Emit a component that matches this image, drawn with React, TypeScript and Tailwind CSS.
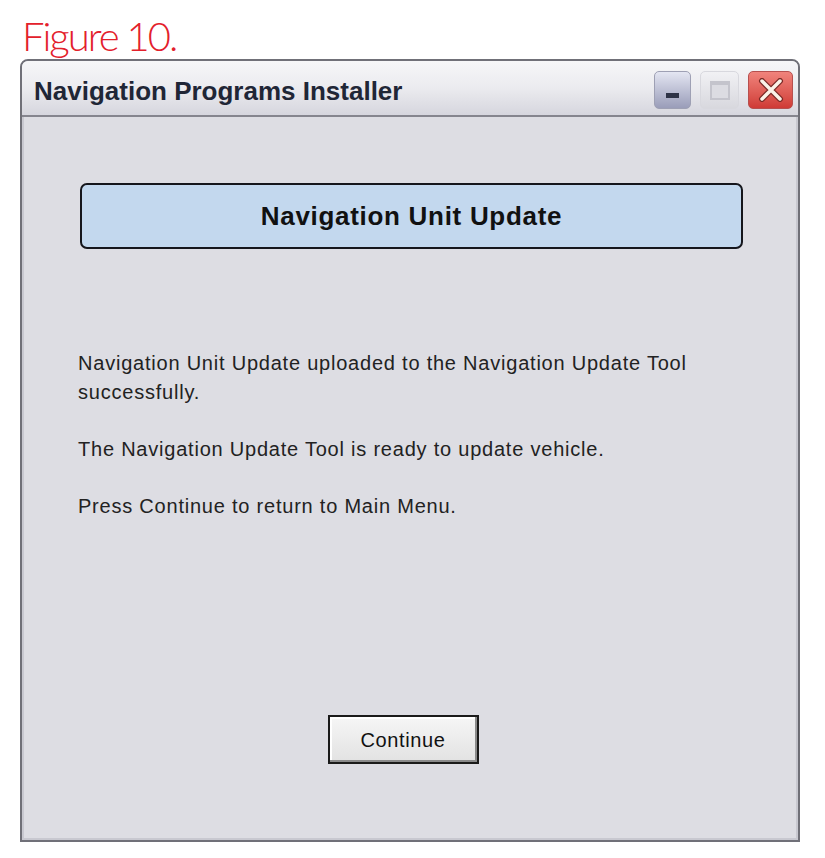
export default function App() {
  return (
    <div className="min-h-screen w-[825px] bg-white pt-[14px] pl-[22px]">
      <div
        className="text-[#e3202b] text-[40px] leading-[44px] font-light tracking-[-2px]"
        style={{ fontFamily: 'Lato, "Open Sans", sans-serif' }}
      >
        Figure 10.
      </div>

      <div className="ml-[-2px] mt-[1px] w-[780px] h-[783px] flex flex-col rounded-t-[8px] border-2 border-[#707078] bg-[#dddde3]">
        {/* title bar */}
        <div className="h-[56px] flex items-center justify-between pl-[12px] pr-[5px] rounded-t-[6px] bg-gradient-to-b from-[#f6f6f8] via-[#ebebef] to-[#d6d6de] border-b-2 border-[#85858e]">
          <span
            className="pt-[6px] text-[26px] font-bold text-[#1f2636] tracking-[0px]"
            style={{ fontFamily: '"Liberation Sans", Arial, sans-serif' }}
          >
            Navigation Programs Installer
          </span>
          <div className="flex items-center gap-[9px] pt-[4px]">
            <div className="w-[37px] h-[38px] rounded-[5px] border border-[#9ea0b4] bg-gradient-to-b from-[#e4e6f2] to-[#9a9db9] flex items-end justify-center pb-[10px]">
              <div className="w-[13px] h-[5px] bg-[#2e3347]" />
            </div>
            <div className="w-[39px] h-[38px] rounded-[5px] border border-[#d8d8de] bg-gradient-to-b from-[#f1f1f4] to-[#d8d8de] flex items-center justify-center">
              <div className="w-[20px] h-[19px] border-2 border-t-[4px] border-[#c4c4cc] bg-[#dcdce2]" />
            </div>
            <div className="w-[45px] h-[38px] rounded-[5px] border border-[#b7504f] bg-gradient-to-b from-[#f0837c] to-[#cf3a36] flex items-center justify-center">
              <svg width="26" height="24" viewBox="0 0 26 24">
                <path d="M4 3 L22 21 M22 3 L4 21" stroke="#7a2a26" strokeWidth="6" strokeLinecap="round" />
                <path d="M4 3 L22 21 M22 3 L4 21" stroke="#fbf3e8" strokeWidth="3.5" strokeLinecap="round" />
              </svg>
            </div>
          </div>
        </div>

        {/* body */}
        <div
          className="flex-1 flex flex-col pt-[66px] pl-[54px] pr-[56px] pb-[74px] border-2 border-t-0 border-[#c8c8d0] text-[#222]"
          style={{ fontFamily: '"Liberation Sans", Arial, sans-serif' }}
        >
          <div className="ml-[2px] w-[663px] h-[66px] rounded-[7px] border-2 border-[#15161c] bg-[#c3d8ee] flex items-center justify-center">
            <span className="text-[26px] font-bold text-[#111] tracking-[0.7px]">Navigation Unit Update</span>
          </div>

          <div className="mt-[100px] text-[20px] leading-[29px] tracking-[0.78px]">
            <p>
              Navigation Unit Update uploaded to the Navigation Update Tool
              <br />
              successfully.
            </p>
            <p className="mt-[28px]">The Navigation Update Tool is ready to update vehicle.</p>
            <p className="mt-[28px]">Press Continue to return to Main Menu.</p>
          </div>

          <div className="flex-1" />
          <div className="flex justify-center pr-[12px]">
            <button className="w-[151px] h-[49px] border-2 border-[#1a1a1a] bg-gradient-to-b from-[#f6f6f6] to-[#e2e2e2] shadow-[inset_-2px_-2px_0_#8a8a8a,inset_2px_2px_0_#ffffff] text-[20px] tracking-[0.6px] text-[#111]">
              Continue
            </button>
          </div>
        </div>
      </div>
    </div>
  );
}
